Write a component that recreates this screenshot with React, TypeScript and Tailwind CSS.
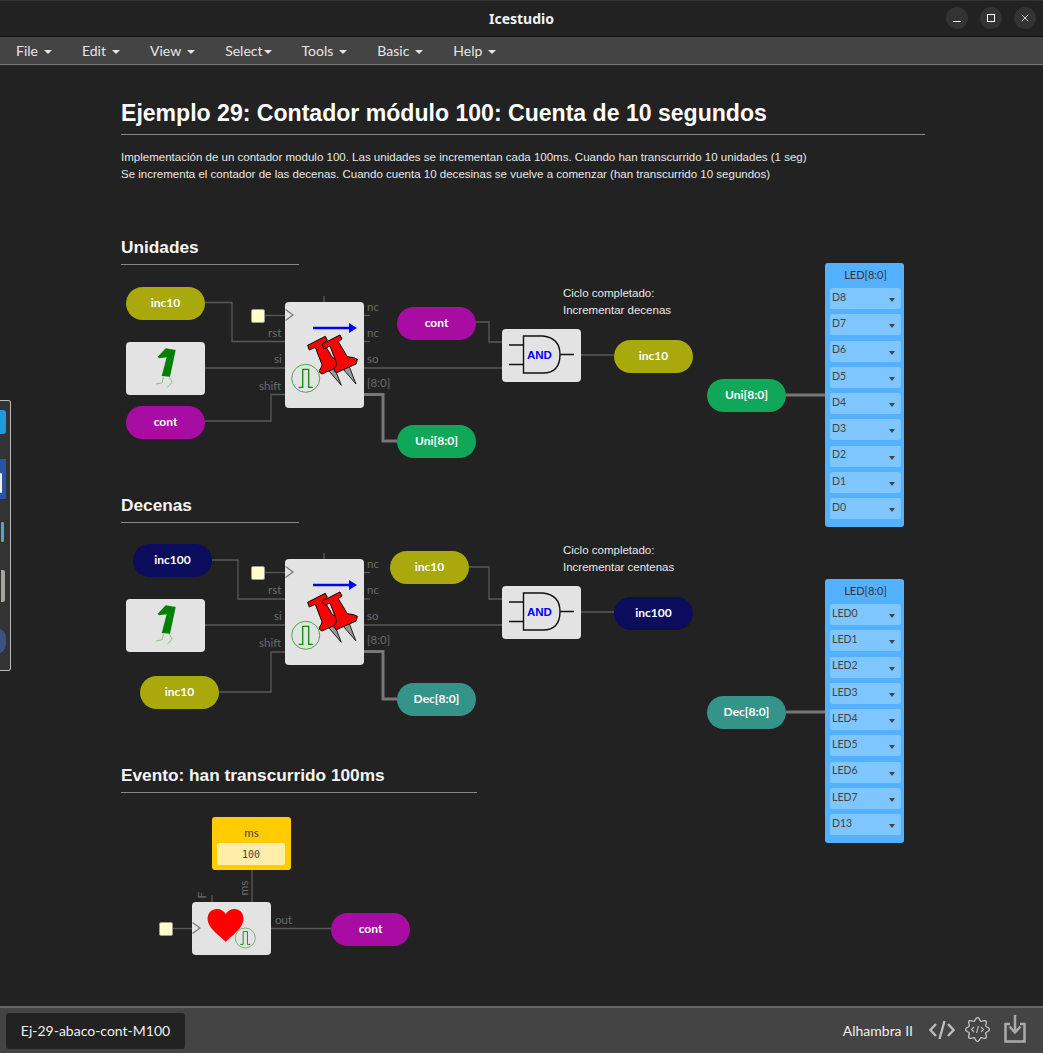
import { X } from 'lucide-react';

// page y of the top of the canvas (title bar + menu bar)
const TOP = 65;

const menus = [
  { name: 'File', gap: 'ml-[6px]' },
  { name: 'Edit', gap: 'ml-[6px]' },
  { name: 'View', gap: 'ml-[6px]' },
  { name: 'Select', gap: 'ml-[1px]' },
  { name: 'Tools', gap: 'ml-[6px]' },
  { name: 'Basic', gap: 'ml-[6px]' },
  { name: 'Help', gap: 'ml-[6px]' },
];

const pills = [
  { label: 'inc10', x: 126, y: 287, color: 'bg-[#a9a80c]' },
  { label: 'cont', x: 126, y: 406, color: 'bg-[#a80ca2]' },
  { label: 'cont', x: 397, y: 307, color: 'bg-[#a80ca2]' },
  { label: 'inc10', x: 614, y: 340, color: 'bg-[#a9a80c]' },
  { label: 'Uni[8:0]', x: 397, y: 425, color: 'bg-[#10a858]' },
  { label: 'Uni[8:0]', x: 707, y: 379, color: 'bg-[#10a858]' },
  { label: 'inc100', x: 133, y: 544, color: 'bg-[#0c0c5c]' },
  { label: 'inc10', x: 140, y: 676, color: 'bg-[#a9a80c]' },
  { label: 'inc10', x: 390, y: 551, color: 'bg-[#a9a80c]' },
  { label: 'inc100', x: 614, y: 597, color: 'bg-[#0c0c5c]' },
  { label: 'Dec[8:0]', x: 397, y: 683, color: 'bg-[#34948a]' },
  { label: 'Dec[8:0]', x: 707, y: 696, color: 'bg-[#34948a]' },
  { label: 'cont', x: 331, y: 913, color: 'bg-[#a80ca2]' },
];

const wires = [
  'M205 302.5H232V341.5H285',
  'M265 315.5H285',
  'M324 296V302',
  'M364 315.5H370',
  'M364 341.5H370',
  'M205 368H285',
  'M364 368H502',
  'M205 421H271V394.5H285',
  'M476 322H489V342H502',
  'M581 355H614',
  'M212 560H238V599H285',
  'M265 572.5H285',
  'M324 553V559',
  'M364 572.5H370',
  'M364 599H370',
  'M205 625H285',
  'M364 625H502',
  'M219 692H271V652H285',
  'M469 567H489V599H502',
  'M581 612H614',
  'M252 870V902',
  'M212 895V902',
  'M172 928.5H192',
  'M271 928.5H331',
];

const buses = [
  'M364 394.5H383V441H397',
  'M786 395H825',
  'M364 651.5H383V699H397',
  'M786 712H825',
];

const portLabels = [
  { text: 'nc', x: 367, y: 300 },
  { text: 'nc', x: 367, y: 326 },
  { text: 'so', x: 367, y: 352 },
  { text: '[8:0]', x: 367, y: 376 },
  { text: 'rst', x: 268, y: 326 },
  { text: 'si', x: 274, y: 352 },
  { text: 'shift', x: 259, y: 379 },
  { text: 'nc', x: 367, y: 557 },
  { text: 'nc', x: 367, y: 583 },
  { text: 'so', x: 367, y: 609 },
  { text: '[8:0]', x: 367, y: 633 },
  { text: 'rst', x: 268, y: 583 },
  { text: 'si', x: 274, y: 609 },
  { text: 'shift', x: 259, y: 636 },
  { text: 'out', x: 275, y: 913 },
];

const ledPanels = [
  { y: 263, pins: ['D8', 'D7', 'D6', 'D5', 'D4', 'D3', 'D2', 'D1', 'D0'] },
  { y: 579, pins: ['LED0', 'LED1', 'LED2', 'LED3', 'LED4', 'LED5', 'LED6', 'LED7', 'D13'] },
];

// wavy 8 lobe outline of the verilog settings gear
function gearPath() {
  const pts: string[] = [];
  for (let i = 0; i < 96; i++) {
    const a = (i / 96) * Math.PI * 2;
    const r = 10.4 + 1.5 * Math.cos(8 * a);
    pts.push(`${(12.5 + r * Math.cos(a)).toFixed(2)} ${(12.5 + r * Math.sin(a)).toFixed(2)}`);
  }
  return `M${pts.join('L')}Z`;
}

function place(x: number, y: number) {
  return { left: x, top: y - TOP };
}

function Pill({ label, x, y, color }: { label: string; x: number; y: number; color: string }) {
  return (
    <div
      style={place(x, y)}
      className={`absolute w-[79px] h-[33px] pb-px rounded-full flex items-center justify-center text-white text-[12px] font-bold font-['Lato',sans-serif] ${color}`}
    >
      {label}
    </div>
  );
}

function Block({ x, y, h, children }: { x: number; y: number; h: number; children?: React.ReactNode }) {
  return (
    <div
      style={{ ...place(x, y), height: h }}
      className="absolute w-[79px] rounded-[4px] bg-[#e3e3e3]"
    >
      {children}
    </div>
  );
}

function ClockSquare({ x, y }: { x: number; y: number }) {
  return (
    <div
      style={place(x, y)}
      className="absolute w-[14px] h-[14px] rounded-[2px] bg-[#ffffcc] border border-[#999]"
    />
  );
}

function Pulse({ cx, cy, r }: { cx: number; cy: number; r: number }) {
  const k = r / 14;
  return (
    <g transform={`translate(${cx} ${cy}) scale(${k})`}>
      <circle r="14" fill="#e3e3e3" stroke="#4aa84a" strokeWidth="1" />
      <path d="M-7 9H-3V-9H3V9H7" fill="none" stroke="#0a8a0a" strokeWidth="1.3" />
    </g>
  );
}

function Pin({ dx, dy }: { dx: number; dy: number }) {
  return (
    <g transform={`translate(${dx} ${dy})`}>
      <path d="M700 298L738 342L718 290Z" fill="#999" stroke="#000" strokeWidth="2.5" />
      <path
        d="M637 222L690 195L696 207L685 215L712 260Q735 262 742 268Q741 276 738 282L680 308Q670 303 672 298Q680 286 680 280L660 228L642 236Z"
        fill="#ff0000"
        stroke="#000"
        strokeWidth="3"
      />
    </g>
  );
}

function ShiftIcon({ y }: { y: number }) {
  return (
    <svg className="absolute left-[285px] w-[79px] h-[106px]" style={{ top: y - TOP }} viewBox="0 0 79 106">
      <path d="M28 26H66" stroke="#0000ff" strokeWidth="2.5" />
      <path d="M64 21L72 26L64 31Z" fill="#0000ff" />
      <g transform="translate(-175 -32) scale(0.3333)">
        <Pin dx={-44} dy={4} />
        <Pin dx={0} dy={0} />
      </g>
      <Pulse cx={20.7} cy={76.3} r={14} />
    </svg>
  );
}

function OneIcon({ y }: { y: number }) {
  return (
    <svg className="absolute left-[126px] w-[79px] h-[53px]" style={{ top: y - TOP }} viewBox="0 0 79 53">
      <path d="M31.7 14.7L39.7 6.3L49.7 8L44 34.7L35.7 34L40.7 15.3L33 16.3Z" fill="#008000" />
      <path
        d="M37.3 35.3L36.3 40.7L30 42M43.3 35.3L46.3 40L41.3 45.3"
        fill="none"
        stroke="#6cb86c"
        strokeWidth="0.8"
      />
    </svg>
  );
}

function AndIcon({ y }: { y: number }) {
  return (
    <div className="absolute left-[502px] w-[79px] h-[53px]" style={{ top: y - TOP }}>
      <svg className="w-full h-full" viewBox="0 0 79 53">
        <path d="M7 16H21M7 35.5H21M58 25.5H72" stroke="#111" strokeWidth="1.4" fill="none" />
        <path d="M21.5 7H41Q58 9 58 25.5Q58 44 41 44H21.5Z" fill="#e3e3e3" stroke="#111" strokeWidth="1.4" />
      </svg>
      <span className="absolute left-[25px] top-[20px] text-[11.5px] leading-[13px] font-bold text-[#0000ff] font-['Liberation_Sans',sans-serif]">
        AND
      </span>
    </div>
  );
}

function LedPanel({ y, pins }: { y: number; pins: string[] }) {
  return (
    <div
      style={place(825, y)}
      className="absolute w-[79px] h-[264px] rounded-[3px] bg-[#53b1ff] pl-[5px] pr-[3px] flex flex-col"
    >
      <div className="h-[25px] flex items-center justify-center text-[11px] text-[#333] font-['Lato',sans-serif]">
        LED[8:0]
      </div>
      <div className="flex flex-col gap-[5.3px]">
        {pins.map((pin) => (
          <div
            key={pin}
            className="h-[21px] rounded-[2px] bg-[#7fc6ff] pl-[2px] pr-[6px] flex items-center justify-between text-[10.5px] text-[#444] font-['Lato',sans-serif]"
          >
            <span className="-mt-[2px]">{pin}</span>
            <span className="mt-[3px] border-x-[3.5px] border-x-transparent border-t-[4px] border-t-[#444]" />
          </div>
        ))}
      </div>
    </div>
  );
}

function SectionTitle({ text, y, width }: { text: string; y: number; width: number }) {
  return (
    <div
      style={{ ...place(121, y), width }}
      className="absolute h-[27px] border-b border-[#888] text-[17.25px] leading-[18px] font-bold text-[#f5f5f5] font-['Liberation_Sans',sans-serif]"
    >
      {text}
    </div>
  );
}

function Note({ lines, y }: { lines: string[]; y: number }) {
  return (
    <div
      style={place(563, y)}
      className="absolute text-[11.5px] leading-[17px] text-[#e8e8e8] font-['Liberation_Sans',sans-serif]"
    >
      {lines.map((l) => (
        <div key={l}>{l}</div>
      ))}
    </div>
  );
}

function Dock() {
  return (
    <div className="absolute left-0 top-[335px] w-[11px] h-[271px] rounded-r-[3px] border border-l-0 border-[#bbb] bg-[#333] overflow-hidden">
      <div className="absolute -left-[6px] top-[9px] w-[12px] h-[24px] rounded-[3px] bg-[#1e9ae0]" />
      <div className="absolute left-0 top-[58px] w-[6px] h-[40px] bg-[#2a52a8]" />
      <div className="absolute left-0 top-[72px] w-[2px] h-[20px] rounded-[1px] bg-[#eee]" />
      <div className="absolute left-px top-[121px] w-[3px] h-[20px] rounded-[1px] bg-[#4ba8cc]" />
      <div className="absolute left-px top-[169px] w-[4px] h-[32px] rounded-r-[2px] bg-[#a5a59c]" />
      <div className="absolute -left-[14px] top-[227px] w-[20px] h-[26px] rounded-full bg-[#3e5282]" />
    </div>
  );
}

export default function App() {
  return (
    <div className="w-[1043px] h-[1053px] flex flex-col overflow-hidden bg-[#222] font-['Lato',sans-serif]">
      <div className="relative h-[37px] shrink-0 bg-[#222] border-t border-[#333] border-b border-b-[#111] flex items-center justify-center">
        <span className="text-[14px] font-bold text-[#f2f2f2] font-['Noto_Sans',sans-serif] -mt-px">Icestudio</span>
        <div className="absolute right-[7px] top-[6px] flex gap-[12px]">
          <button className="w-[22px] h-[22px] rounded-full bg-[#333] flex items-center justify-center">
            <span className="w-[8px] h-px bg-white mt-[6px]" />
          </button>
          <button className="w-[22px] h-[22px] rounded-full bg-[#333] flex items-center justify-center">
            <span className="w-[8px] h-[8px] border border-white" />
          </button>
          <button className="w-[22px] h-[22px] rounded-full bg-[#333] flex items-center justify-center text-white">
            <X size={12} strokeWidth={1.5} />
          </button>
        </div>
      </div>

      <div className="h-[28px] shrink-0 bg-[#444] border-b border-[#777] pl-4 flex items-center gap-[30px] text-[14px] text-[#e6e6e6]">
        {menus.map((m) => (
          <div key={m.name} className="flex items-center">
            <span>{m.name}</span>
            <span className={`${m.gap} mt-[2px] border-x-[4px] border-x-transparent border-t-[4px] border-t-[#e6e6e6]`} />
          </div>
        ))}
      </div>

      <div className="relative flex-1 bg-[#222] overflow-hidden">
        <div className="absolute left-[121px] top-[34px] w-[804px] h-[36px] border-b border-[#888] text-[23.07px] leading-[28px] font-bold text-white font-['Liberation_Sans',sans-serif]">
          Ejemplo 29: Contador módulo 100: Cuenta de 10 segundos
        </div>
        <div className="absolute left-[121px] top-[84px] text-[11.53px] leading-[17px] text-[#e8e8e8] font-['Liberation_Sans',sans-serif]">
          <div>Implementación de un contador modulo 100. Las unidades se incrementan cada 100ms. Cuando han transcurrido 10 unidades (1 seg)</div>
          <div>Se incrementa el contador de las decenas. Cuando cuenta 10 decesinas se vuelve a comenzar (han transcurrido 10 segundos)</div>
        </div>

        <SectionTitle text="Unidades" y={238} width={178} />
        <SectionTitle text="Decenas" y={496} width={178} />
        <SectionTitle text="Evento: han transcurrido 100ms" y={766} width={356} />

        <Note lines={['Ciclo completado:', 'Incrementar decenas']} y={285} />
        <Note lines={['Ciclo completado:', 'Incrementar centenas']} y={542} />

        <svg className="absolute left-0 top-[-65px] w-[1043px] h-[1053px]" viewBox="0 0 1043 1053">
          {wires.map((d) => (
            <path key={d} d={d} fill="none" stroke="#5a5a5a" strokeWidth="1.3" />
          ))}
          {buses.map((d) => (
            <path key={d} d={d} fill="none" stroke="#777" strokeWidth="3" />
          ))}
        </svg>

        {pills.map((p, i) => (
          <Pill key={i} {...p} />
        ))}

        <Block x={126} y={342} h={53} />
        <OneIcon y={342} />
        <Block x={126} y={599} h={53} />
        <OneIcon y={599} />

        <Block x={285} y={302} h={106} />
        <ShiftIcon y={302} />
        <Block x={285} y={559} h={106} />
        <ShiftIcon y={559} />

        <Block x={502} y={329} h={53} />
        <AndIcon y={329} />
        <Block x={502} y={586} h={53} />
        <AndIcon y={586} />

        <ClockSquare x={251} y={309} />
        <ClockSquare x={251} y={566} />
        <ClockSquare x={159} y={922} />

        {portLabels.map((l) => (
          <span
            key={`${l.text}${l.x}${l.y}`}
            style={place(l.x, l.y)}
            className="absolute text-[11.5px] leading-[14px] text-[#6b6b6b]"
          >
            {l.text}
          </span>
        ))}

        {ledPanels.map((p) => (
          <LedPanel key={p.y} {...p} />
        ))}

        <div
          style={place(212, 817)}
          className="absolute w-[79px] h-[53px] rounded-[3px] bg-[#ffcc00] px-[5px] pt-[5px] flex flex-col"
        >
          <div className="h-[21px] flex items-center justify-center text-[11.5px] text-[#444]">ms</div>
          <div className="h-[22px] w-[68px] rounded-[2px] bg-[#ffeeaa] flex items-center justify-center text-[10px] text-[#444] font-['DejaVu_Sans_Mono',monospace]">
            100
          </div>
        </div>

        <Block x={192} y={902} h={53} />
        <svg className="absolute left-[192px] top-[837px] w-[79px] h-[53px]" viewBox="0 0 79 53">
          <path
            d="M33.7 39.7C28 34 15.5 26 15.5 17C15.5 10.5 20 7 25 7C29 7 32 9 33.7 12C35.5 9 38.5 7 42.5 7C47.5 7 51.5 10.5 51.5 17C51.5 26 39.5 34 33.7 39.7Z"
            fill="#ff0000"
          />
          <Pulse cx={53.3} cy={36} r={10} />
        </svg>
        <span className="absolute left-[199px] top-[823px] -rotate-90 text-[12px] leading-[14px] text-[#6b6b6b]">F</span>
        <span className="absolute left-[236px] top-[816px] -rotate-90 text-[12px] leading-[14px] text-[#6b6b6b]">ms</span>

        <svg className="absolute left-0 top-[-65px] w-[1043px] h-[1053px] pointer-events-none" viewBox="0 0 1043 1053">
          <path d="M285.5 309.5L293 315L285.5 320.5" fill="none" stroke="#777" strokeWidth="1.2" />
          <path d="M285.5 566.5L293 572L285.5 577.5" fill="none" stroke="#777" strokeWidth="1.2" />
          <path d="M192.5 922.5L200 928L192.5 933.5" fill="none" stroke="#777" strokeWidth="1.2" />
        </svg>

        <Dock />
      </div>

      <div className="h-[47px] shrink-0 bg-[#444] border-t-2 border-[#666] flex items-center justify-between pl-[6px] pr-[17px]">
        <div className="h-[36px] w-[179px] rounded-[3px] bg-[#222] flex items-center justify-center text-[14px] text-[#eee]">
          Ej-29-abaco-cont-M100
        </div>
        <div className="flex items-center">
          <span className="text-[14px] text-[#eee] mr-[16px]">Alhambra II</span>
          <svg className="w-[26px] h-[22px] mr-[10px] -mt-[2px]" viewBox="0 0 26 22" fill="none" stroke="#bbb" strokeWidth="2.4">
            <path d="M7 5L1.5 11L7 17M19 5L24.5 11L19 17M15.5 2L10.5 20" />
          </svg>
          <svg className="w-[25px] h-[25px] mr-[14px] -mt-[2px]" viewBox="0 0 25 25" fill="none" stroke="#bbb">
            <path d={gearPath()} strokeWidth="1.4" />
            <path d="M9 10L6.5 12.5L9 15M16 10L18.5 12.5L16 15M13.5 9L11.5 16" strokeWidth="1.1" />
          </svg>
          <svg className="w-[22px] h-[28px] -mt-[4px]" viewBox="0 0 22 28" fill="none" stroke="#aaa" strokeWidth="2.5">
            <path d="M6 9H1.5V26.5H20.5V9H16" />
            <path d="M11 0V16M5.5 11.5L11 17.5L16.5 11.5" />
          </svg>
        </div>
      </div>
    </div>
  );
}
